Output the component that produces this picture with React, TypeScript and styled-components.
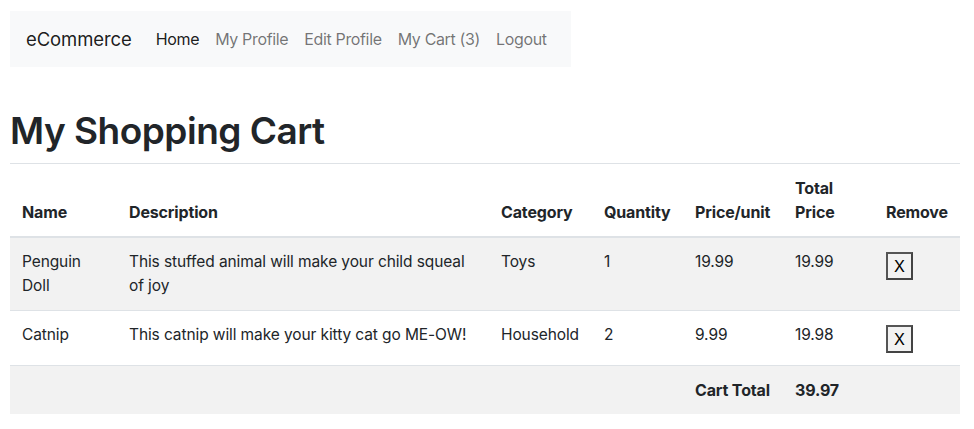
import React from "react";
import styled, { createGlobalStyle } from "styled-components";

const GlobalStyle = createGlobalStyle`
  * { box-sizing: border-box; }
  body {
    margin: 0;
    padding: 11px 10px;
    background: #fff;
    color: #212529;
    font-family: Inter, "Noto Sans", "Liberation Sans", sans-serif;
    font-size: 16px;
    line-height: 24px;
  }
`;

const Page = styled.div`
  width: 950px;
`;

const Navbar = styled.nav`
  display: inline-flex;
  align-items: center;
  height: 56px;
  padding: 0 16px;
  background: #f8f9fa;
`;

const Brand = styled.a`
  font-size: 18.5px;
  color: rgba(0, 0, 0, 0.9);
  margin-right: 16px;
  text-decoration: none;
  letter-spacing: -0.1px;
`;

const NavLinks = styled.div`
  display: flex;
`;

const NavLink = styled.a<{ $active?: boolean }>`
  padding: 8px;
  font-size: 16px;
  text-decoration: none;
  letter-spacing: -0.35px;
  color: ${(p) => (p.$active ? "rgba(0, 0, 0, 0.9)" : "rgba(0, 0, 0, 0.55)")};
`;

const Title = styled.h1`
  margin: 40px 0 8px;
  font-size: 37px;
  font-weight: 600;
  line-height: 48px;
  letter-spacing: -0.5px;
`;

const Table = styled.table`
  width: 950px;
  border-collapse: collapse;
  table-layout: fixed;
  border-top: 1px solid #dee2e6;
`;

const Th = styled.th`
  padding: 12px;
  text-align: left;
  vertical-align: bottom;
  font-weight: 700;
  font-size: 16px;
  line-height: 24px;
  letter-spacing: -0.15px;
  border-bottom: 2px solid #dee2e6;
`;

const Row = styled.tr<{ $striped?: boolean }>`
  background: ${(p) => (p.$striped ? "#f2f2f2" : "#fff")};
`;

const Td = styled.td<{ $bold?: boolean }>`
  padding: 12px;
  vertical-align: top;
  font-size: ${(p) => (p.$bold ? "16px" : "15.5px")};
  line-height: 24px;
  letter-spacing: ${(p) => (p.$bold ? "-0.15px" : "-0.1px")};
  font-weight: ${(p) => (p.$bold ? 700 : 400)};
  border-bottom: 1px solid #dee2e6;
`;

const FootTd = styled(Td)`
  border-bottom: none;
`;

const RemoveButton = styled.button`
  display: inline-block;
  vertical-align: top;
  height: 28px;
  margin: 2px 0 0;
  padding: 0 6px;
  font-family: inherit;
  font-size: 16px;
  line-height: 24px;
  color: #000;
  background: #f2f2f2;
  border: 2px solid #555;
  border-right-color: #444;
  border-bottom-color: #444;
  border-radius: 0;
`;

const columns = [
  { label: "Name", width: 107 },
  { label: "Description", width: 372 },
  { label: "Category", width: 103 },
  { label: "Quantity", width: 91 },
  { label: "Price/unit", width: 100 },
  { label: "Total Price", width: 91 },
  { label: "Remove", width: 86 },
];

const items = [
  {
    name: "Penguin Doll",
    description: "This stuffed animal will make your child squeal of joy",
    category: "Toys",
    quantity: 1,
    price: 19.99,
  },
  {
    name: "Catnip",
    description: "This catnip will make your kitty cat go ME-OW!",
    category: "Household",
    quantity: 2,
    price: 9.99,
  },
];

const App: React.FC = () => {
  const total = items.reduce((sum, i) => sum + i.price * i.quantity, 0);

  return (
    <Page>
      <GlobalStyle />
      <Navbar>
        <Brand href="#">eCommerce</Brand>
        <NavLinks>
          <NavLink href="#" $active>
            Home
          </NavLink>
          <NavLink href="#">My Profile</NavLink>
          <NavLink href="#">Edit Profile</NavLink>
          <NavLink href="#">My Cart (3)</NavLink>
          <NavLink href="#">Logout</NavLink>
        </NavLinks>
      </Navbar>
      <Title>My Shopping Cart</Title>
      <Table>
        <colgroup>
          {columns.map((c) => (
            <col key={c.label} style={{ width: c.width }} />
          ))}
        </colgroup>
        <thead>
          <tr>
            {columns.map((c) => (
              <Th key={c.label}>{c.label}</Th>
            ))}
          </tr>
        </thead>
        <tbody>
          {items.map((item, idx) => (
            <Row key={item.name} $striped={idx % 2 === 0}>
              <Td>{item.name}</Td>
              <Td>{item.description}</Td>
              <Td>{item.category}</Td>
              <Td>{item.quantity}</Td>
              <Td>{item.price.toFixed(2)}</Td>
              <Td>{(item.price * item.quantity).toFixed(2)}</Td>
              <Td>
                <RemoveButton>X</RemoveButton>
              </Td>
            </Row>
          ))}
        </tbody>
        <tfoot>
          <Row $striped>
            <FootTd />
            <FootTd />
            <FootTd />
            <FootTd />
            <FootTd $bold>Cart Total</FootTd>
            <FootTd $bold>{total.toFixed(2)}</FootTd>
            <FootTd />
          </Row>
        </tfoot>
      </Table>
    </Page>
  );
};

export default App;
